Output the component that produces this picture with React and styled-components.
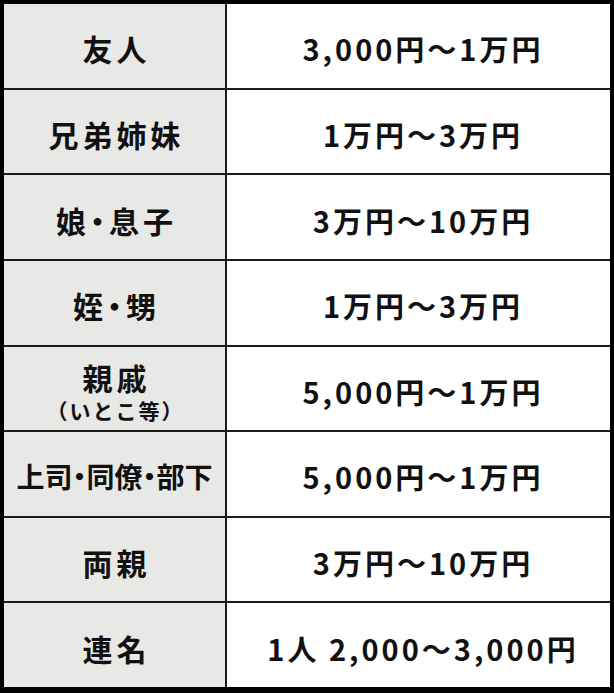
import React from "react";
import styled, { createGlobalStyle } from "styled-components";

const Global = createGlobalStyle`
  html, body { margin: 0; padding: 0; background: #fff; }
  body { font-family: "Noto Sans CJK JP", "Noto Sans", sans-serif; }
`;

const Table = styled.div`
  box-sizing: border-box;
  width: 614px;
  height: 693px;
  display: grid;
  grid-template-columns: 221px 1fr;
  grid-template-rows: repeat(8, 1fr);
  gap: 2px;
  background: #1c1c1c;
  border: 4px solid #000;
  border-bottom-width: 6px;
`;

const Label = styled.div`
  background: #e8e8e6;
  display: flex;
  flex-direction: column;
  align-items: center;
  justify-content: center;
  color: #111;
  font-weight: 700;
  padding-top: 5px;
`;

const LabelText = styled.span`
  font-size: ${(p) => p.$size}px;
  line-height: 36px;
  letter-spacing: ${(p) => p.$ls}px;
  margin-right: ${(p) => -p.$ls}px;
  font-feature-settings: "palt";
  white-space: nowrap;
`;

const SubText = styled.span`
  font-size: 21px;
  line-height: 26px;
  margin-top: 2px;
  letter-spacing: 2px;
  margin-right: -2px;
  white-space: nowrap;
`;

const Value = styled.div`
  background: #fff;
  display: flex;
  align-items: center;
  justify-content: center;
  color: #111;
  font-weight: 700;
  font-size: 29px;
  padding-top: 5px;
  padding-left: 6px;
  white-space: nowrap;
`;

const ValueText = styled.span`
  letter-spacing: 3px;
  margin-right: -3px;
`;

const rows = [
  { label: "友人", size: 30, ls: 4, value: "3,000円〜1万円" },
  { label: "兄弟姉妹", size: 30, ls: 4, value: "1万円〜3万円" },
  { label: "娘・息子", size: 30, ls: 4, value: "3万円〜10万円" },
  { label: "姪・甥", size: 30, ls: 4, value: "1万円〜3万円" },
  { label: "親戚", size: 30, ls: 4, sub: "（いとこ等）", value: "5,000円〜1万円" },
  { label: "上司・同僚・部下", size: 28, ls: 0, value: "5,000円〜1万円" },
  { label: "両親", size: 30, ls: 4, value: "3万円〜10万円" },
  { label: "連名", size: 30, ls: 4, value: "1人 2,000〜3,000円" },
];

export default function App() {
  return (
    <>
      <Global />
      <Table>
        {rows.map((r) => (
          <React.Fragment key={r.label}>
            <Label>
              <LabelText $size={r.size} $ls={r.ls}>
                {r.label}
              </LabelText>
              {r.sub && <SubText>{r.sub}</SubText>}
            </Label>
            <Value>
              <ValueText>{r.value}</ValueText>
            </Value>
          </React.Fragment>
        ))}
      </Table>
    </>
  );
}
